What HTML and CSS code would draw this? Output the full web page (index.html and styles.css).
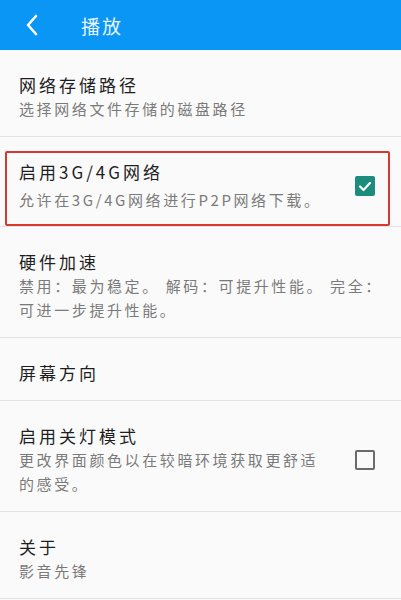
FILE: index.html
```html
<!DOCTYPE html>
<html lang="zh-CN">
<head>
    <meta charset="UTF-8" />
    <meta name="viewport" content="width=device-width, initial-scale=1.0" />
    <title>播放</title>
    <link rel="stylesheet" href="styles.css">
</head>
<body>
    <div class="toolbar">
        <svg class="back" viewBox="0 0 14 24" width="14" height="24">
            <polyline points="11,3 3,12 11,21" />
        </svg>
        <h1>播放</h1>
    </div>

    <div class="pref-list">
        <div class="pref">
            <div class="pref-text">
                <div class="pref-title">网络存储路径</div>
                <div class="pref-summary">选择网络文件存储的磁盘路径</div>
            </div>
        </div>

        <div class="pref pref-marked">
            <div class="pref-text">
                <div class="pref-title">启用3G/4G网络</div>
                <div class="pref-summary">允许在3G/4G网络进行P2P网络下载。</div>
            </div>
            <span class="check checked">
                <svg viewBox="0 0 20 20" width="20" height="20">
                    <polyline points="5,10.5 8.5,14 15,7" />
                </svg>
            </span>
            <!-- annotation box -->
            <div class="highlight"></div>
        </div>

        <div class="pref">
            <div class="pref-text">
                <div class="pref-title">硬件加速</div>
                <div class="pref-summary">禁用：最为稳定。 解码：可提升性能。 完全：可进一步提升性能。</div>
            </div>
        </div>

        <div class="pref">
            <div class="pref-text">
                <div class="pref-title">屏幕方向</div>
            </div>
        </div>

        <div class="pref">
            <div class="pref-text narrow">
                <div class="pref-title">启用关灯模式</div>
                <div class="pref-summary">更改界面颜色以在较暗环境获取更舒适的感受。</div>
            </div>
            <span class="check"></span>
        </div>

        <div class="pref">
            <div class="pref-text">
                <div class="pref-title">关于</div>
                <div class="pref-summary">影音先锋</div>
            </div>
        </div>
    </div>
</body>
</html>
```

FILE: styles.css
```css
body {
    margin: 0;
    background: #fafafa;
    font-family: "Noto Sans CJK SC", "Noto Sans", sans-serif;
    color: #222;
}

.toolbar {
    height: 50px;
    background: #0a96f5;
    display: flex;
    align-items: center;
    padding-left: 25px;
}

.back {
    fill: none;
    stroke: #ffffff;
    stroke-width: 2.6;
    stroke-linecap: round;
    stroke-linejoin: round;
}

.toolbar h1 {
    margin: 0 0 0 42px;
    font-size: 19px;
    font-weight: normal;
    letter-spacing: 2px;
    color: #eaf5ff;
}

.pref {
    position: relative;
    display: flex;
    align-items: center;
    padding: 23px 12px 15px 19px;
    border-bottom: 1px solid #e2e2e2;
}

.pref-text {
    flex: 1;
}

.pref-text.narrow {
    padding-right: 30px;
}

.pref-title {
    font-size: 17px;
    line-height: 24px;
    letter-spacing: 3px;
    color: #1e1e1e;
}

.pref-summary {
    font-size: 15px;
    line-height: 24px;
    letter-spacing: 2.6px;
    color: #7a7a7a;
}

.pref-marked {
    padding-bottom: 14px;
}

.pref-marked .pref-summary {
    margin-top: 4px;
}

.check {
    width: 16px;
    height: 16px;
    margin-right: 14px;
    border: 2px solid #6a6a6a;
    border-radius: 2px;
    flex: none;
}

.check.checked {
    width: 20px;
    height: 20px;
    border: none;
    background: #1c8d7c;
}

.check svg {
    display: block;
    fill: none;
    stroke: #ffffff;
    stroke-width: 2.2;
    stroke-linecap: round;
    stroke-linejoin: round;
}

/* red annotation box */
.highlight {
    position: absolute;
    left: 5px;
    right: 11px;
    top: 14px;
    bottom: 0;
    border: 2px solid #d6392f;
    border-radius: 2px;
}
```
